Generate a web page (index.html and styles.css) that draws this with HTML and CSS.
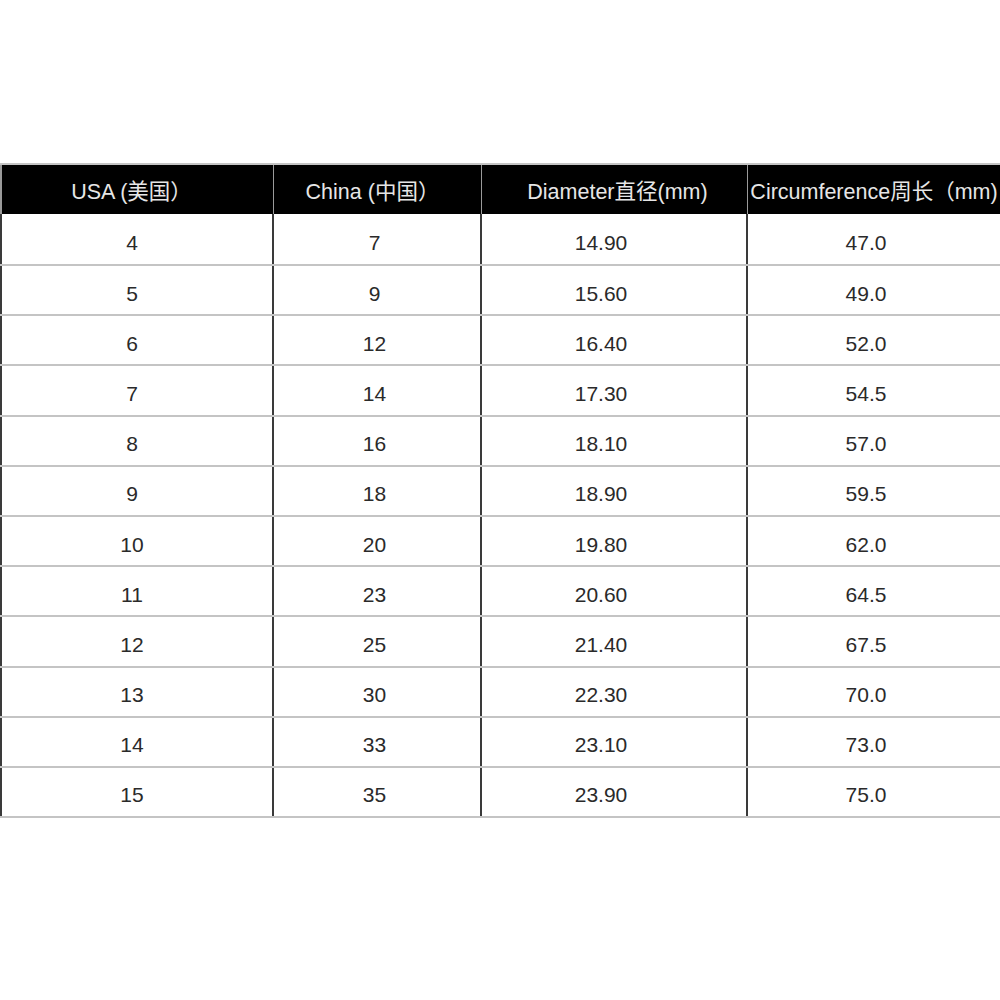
FILE: index.html
```html
<!DOCTYPE html>
<html lang="zh">
<head>
<meta charset="utf-8">
<title>Ring size chart</title>
<link rel="stylesheet" href="styles.css">
</head>
<body>
<div class="chart">
  <div class="row head">
    <div class="cell c1">USA (美国）</div>
    <div class="cell c2">China (中国）</div>
    <div class="cell c3">Diameter直径(mm)</div>
    <div class="cell c4">Circumference周长（mm)</div>
  </div>
  <div class="row first"><div class="cell c1">4</div><div class="cell c2">7</div><div class="cell c3">14.90</div><div class="cell c4">47.0</div></div>
  <div class="row"><div class="cell c1">5</div><div class="cell c2">9</div><div class="cell c3">15.60</div><div class="cell c4">49.0</div></div>
  <div class="row"><div class="cell c1">6</div><div class="cell c2">12</div><div class="cell c3">16.40</div><div class="cell c4">52.0</div></div>
  <div class="row"><div class="cell c1">7</div><div class="cell c2">14</div><div class="cell c3">17.30</div><div class="cell c4">54.5</div></div>
  <div class="row"><div class="cell c1">8</div><div class="cell c2">16</div><div class="cell c3">18.10</div><div class="cell c4">57.0</div></div>
  <div class="row"><div class="cell c1">9</div><div class="cell c2">18</div><div class="cell c3">18.90</div><div class="cell c4">59.5</div></div>
  <div class="row"><div class="cell c1">10</div><div class="cell c2">20</div><div class="cell c3">19.80</div><div class="cell c4">62.0</div></div>
  <div class="row"><div class="cell c1">11</div><div class="cell c2">23</div><div class="cell c3">20.60</div><div class="cell c4">64.5</div></div>
  <div class="row"><div class="cell c1">12</div><div class="cell c2">25</div><div class="cell c3">21.40</div><div class="cell c4">67.5</div></div>
  <div class="row"><div class="cell c1">13</div><div class="cell c2">30</div><div class="cell c3">22.30</div><div class="cell c4">70.0</div></div>
  <div class="row"><div class="cell c1">14</div><div class="cell c2">33</div><div class="cell c3">23.10</div><div class="cell c4">73.0</div></div>
  <div class="row"><div class="cell c1">15</div><div class="cell c2">35</div><div class="cell c3">23.90</div><div class="cell c4">75.0</div></div>
</div>
</body>
</html>
```

FILE: styles.css
```css
html, body {
  margin: 0;
  padding: 0;
  background: #ffffff;
}

body {
  width: 1000px;
  height: 1000px;
  overflow: hidden;
  font-family: "Liberation Sans", "Noto Sans CJK SC", Arial, sans-serif;
  font-size: 21px;
  color: #2a2a2a;
}

.chart {
  padding-top: 163px;
}

.row {
  display: grid;
  grid-template-columns: 274px 208px 266px 1fr;
  height: 50.2px;
  box-sizing: border-box;
  border-bottom: 2px solid #c4c4c4;
}

.row.first {
  height: 52px;
}

.row.head {
  height: 51px;
  background: #000000;
  color: #e6e6e6;
  border-top: 2px solid #c4c4c4;
  border-bottom: none;
  font-size: 21.5px;
}

.cell {
  display: flex;
  align-items: center;
  justify-content: center;
  white-space: nowrap;
  box-sizing: border-box;
  border-right: 2px solid #3a3a3a;
  padding-top: 7px;
}

.c1 {
  border-left: 2px solid #3a3a3a;
  padding-right: 10px;
}

.c2 {
  padding-right: 5px;
}

.c3 {
  padding-right: 26px;
}

.c4 {
  padding-right: 16px;
  border-right: none;
}

.head .cell {
  padding-top: 0;
  border-right-color: #9a9a9a;
  border-right-width: 1px;
}

.head .c1 {
  border-left-color: #9a9a9a;
  padding-right: 12px;
}

.head .c2 {
  padding-right: 10px;
}

.head .c3 {
  padding-right: 0;
  padding-left: 6px;
}

.head .c4 {
  padding-right: 0;
}
```
